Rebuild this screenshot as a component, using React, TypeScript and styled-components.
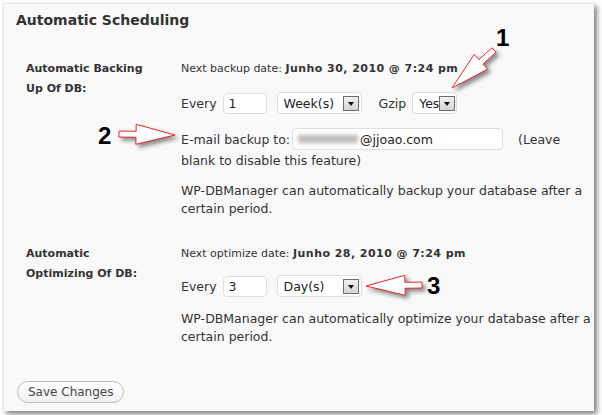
import React from "react";
import styled, { createGlobalStyle } from "styled-components";

const GlobalStyle = createGlobalStyle`
  html, body {
    margin: 0;
    padding: 0;
    background: #ffffff;
  }
  body {
    font-family: "DejaVu Sans", Verdana, sans-serif;
    color: #333333;
  }
`;

const Page = styled.div`
  position: relative;
  width: 602px;
  height: 415px;
  padding: 3px;
  box-sizing: border-box;
  overflow: hidden;
`;

const Panel = styled.div`
  width: 591px;
  height: 408px;
  box-sizing: border-box;
  background: #f9f9f9;
  border-top: 1px solid #e6e6e6;
  border-left: 1px solid #e6e6e6;
  box-shadow: 3px 3px 5px rgba(0, 0, 0, 0.5);
  padding: 6px 0 0 12px;
  display: flex;
  flex-direction: column;
`;

const Title = styled.h3`
  margin: 0;
  font-size: 14px;
  line-height: 20px;
  font-weight: bold;
  color: #333333;
`;

const Section = styled.div<{ $top: number }>`
  display: grid;
  grid-template-columns: 155px 1fr;
  margin-top: ${(p) => p.$top}px;
  padding-left: 10px;
`;

const Label = styled.div`
  font-size: 11px;
  line-height: 20px;
  font-weight: bold;
  color: #333333;
`;

const Content = styled.div`
  display: flex;
  flex-direction: column;
`;

const NextLine = styled.div`
  font-size: 11px;
  line-height: 20px;
  b {
    font-weight: bold;
    letter-spacing: 0.45px;
  }
`;

const Row = styled.div<{ $top: number }>`
  display: flex;
  align-items: center;
  height: 22px;
  margin-top: ${(p) => p.$top}px;
  font-size: 12.5px;
`;

const Text = styled.span<{ $gap?: number }>`
  margin-right: ${(p) => p.$gap ?? 0}px;
  white-space: nowrap;
`;

const Input = styled.div<{ $width: number; $gap?: number; $height?: number }>`
  display: flex;
  align-items: center;
  flex: none;
  width: ${(p) => p.$width}px;
  height: ${(p) => p.$height ?? 21}px;
  box-sizing: border-box;
  padding: 0 5px;
  background: #ffffff;
  border: 1px solid #dfdfdf;
  border-radius: 4px;
  margin-right: ${(p) => p.$gap ?? 0}px;
  font-size: 12.5px;
  color: #222222;
`;

const Select = styled.div<{ $width: number; $gap?: number }>`
  display: flex;
  align-items: center;
  justify-content: space-between;
  flex: none;
  width: ${(p) => p.$width}px;
  height: 22px;
  box-sizing: border-box;
  padding: 0 2px 0 6px;
  background: #ffffff;
  border: 1px solid #dfdfdf;
  border-radius: 4px;
  margin-right: ${(p) => p.$gap ?? 0}px;
  font-size: 12.5px;
  color: #222222;
  white-space: nowrap;
  overflow: hidden;
`;

const DropButton = styled.span`
  flex: none;
  display: flex;
  align-items: center;
  justify-content: center;
  width: 16px;
  height: 15px;
  box-sizing: border-box;
  border: 1px solid #6e6e6e;
  background: linear-gradient(#f2f2f2, #d4d4d4);
  &::after {
    content: "";
    margin-top: 2px;
    border-left: 3.5px solid transparent;
    border-right: 3.5px solid transparent;
    border-top: 4px solid #111111;
  }
`;

const Line = styled.div`
  font-size: 12.5px;
  line-height: 22px;
`;

const Blurred = styled.span`
  display: inline-block;
  flex: none;
  width: 60px;
  height: 8px;
  margin-right: 2px;
  background: rgba(130, 130, 130, 0.55);
  filter: blur(2px);
`;

const Desc = styled.p<{ $top: number }>`
  margin: ${(p) => p.$top}px 0 0;
  font-size: 12.5px;
  line-height: 18px;
`;

const SaveButton = styled.button`
  align-self: flex-start;
  margin: 35px 0 0 1px;
  height: 22px;
  padding: 0 10px;
  border: 1px solid #bbbbbb;
  border-radius: 11px;
  background: linear-gradient(#ffffff, #f1f1f1);
  font-family: "DejaVu Sans", Verdana, sans-serif;
  font-size: 12px;
  color: #464646;
`;

const Overlay = styled.svg`
  position: absolute;
  left: 0;
  top: 0;
  pointer-events: none;
  filter: drop-shadow(3px 3px 2px rgba(0, 0, 0, 0.45));
`;

const Marker = styled.span<{ $x: number; $y: number }>`
  position: absolute;
  left: ${(p) => p.$x}px;
  top: ${(p) => p.$y}px;
  font-family: "Liberation Sans", Arial, sans-serif;
  font-weight: bold;
  font-size: 24px;
  line-height: 24px;
  color: #000000;
`;

type Pt = [number, number];

// block arrow from tail to tip, returned as polygon points
function arrowPoints(tail: Pt, tip: Pt, headLen = 39, headHalf = 10, tailHalf = 3) {
  const dx = tip[0] - tail[0];
  const dy = tip[1] - tail[1];
  const len = Math.hypot(dx, dy);
  const ux = dx / len;
  const uy = dy / len;
  const nx = -uy;
  const ny = ux;
  const bx = tip[0] - ux * headLen;
  const by = tip[1] - uy * headLen;
  const pts: Pt[] = [
    [tail[0] + nx * tailHalf, tail[1] + ny * tailHalf],
    [bx + nx * tailHalf, by + ny * tailHalf],
    [bx + nx * headHalf, by + ny * headHalf],
    tip,
    [bx - nx * headHalf, by - ny * headHalf],
    [bx - nx * tailHalf, by - ny * tailHalf],
    [tail[0] - nx * tailHalf, tail[1] - ny * tailHalf],
  ];
  return pts.map((p) => `${p[0].toFixed(1)},${p[1].toFixed(1)}`).join(" ");
}

const arrows: { tail: Pt; tip: Pt }[] = [
  { tail: [494, 50], tip: [452, 88] },
  { tail: [119, 134], tip: [175, 135] },
  { tail: [422, 285], tip: [366, 286] },
];

const App = () => {
  return (
    <Page>
      <GlobalStyle />
      <Panel>
        <Title>Automatic Scheduling</Title>

        <Section $top={29}>
          <Label>
            Automatic Backing
            <br />
            Up Of DB:
          </Label>
          <Content>
            <NextLine>
              Next backup date: <b>Junho 30, 2010 @ 7:24 pm</b>
            </NextLine>
            <Row $top={13}>
              <Text $gap={6}>Every</Text>
              <Input $width={44} $gap={10}>
                1
              </Input>
              <Select $width={85} $gap={17}>
                Week(s)
                <DropButton />
              </Select>
              <Text $gap={6}>Gzip</Text>
              <Select $width={45}>
                Yes
                <DropButton />
              </Select>
            </Row>
            <Row $top={14}>
              <Text $gap={2}>E-mail backup to:</Text>
              <Input $width={211} $gap={15} $height={22}>
                <Blurred />
                @jjoao.com
              </Input>
              <Text>(Leave</Text>
            </Row>
            <Line>blank to disable this feature)</Line>
            <Desc $top={10}>
              WP-DBManager can automatically backup your database after a
              certain period.
            </Desc>
          </Content>
        </Section>

        <Section $top={26}>
          <Label>
            Automatic
            <br />
            Optimizing Of DB:
          </Label>
          <Content>
            <NextLine>
              Next optimize date: <b>Junho 28, 2010 @ 7:24 pm</b>
            </NextLine>
            <Row $top={11}>
              <Text $gap={6}>Every</Text>
              <Input $width={44} $gap={10}>
                3
              </Input>
              <Select $width={85}>
                Day(s)
                <DropButton />
              </Select>
            </Row>
            <Desc $top={13}>
              WP-DBManager can automatically optimize your database after a
              certain period.
            </Desc>
          </Content>
        </Section>

        <SaveButton>Save Changes</SaveButton>
      </Panel>

      <Overlay width={602} height={415} viewBox="0 0 602 415">
        {arrows.map((a, i) => (
          <polygon
            key={i}
            points={arrowPoints(a.tail, a.tip)}
            fill="#ffffff"
            stroke="#e8262b"
            strokeWidth={1}
            strokeLinejoin="miter"
          />
        ))}
      </Overlay>
      <Marker $x={496} $y={26}>1</Marker>
      <Marker $x={98} $y={124}>2</Marker>
      <Marker $x={427} $y={274}>3</Marker>
    </Page>
  );
};

export default App;
